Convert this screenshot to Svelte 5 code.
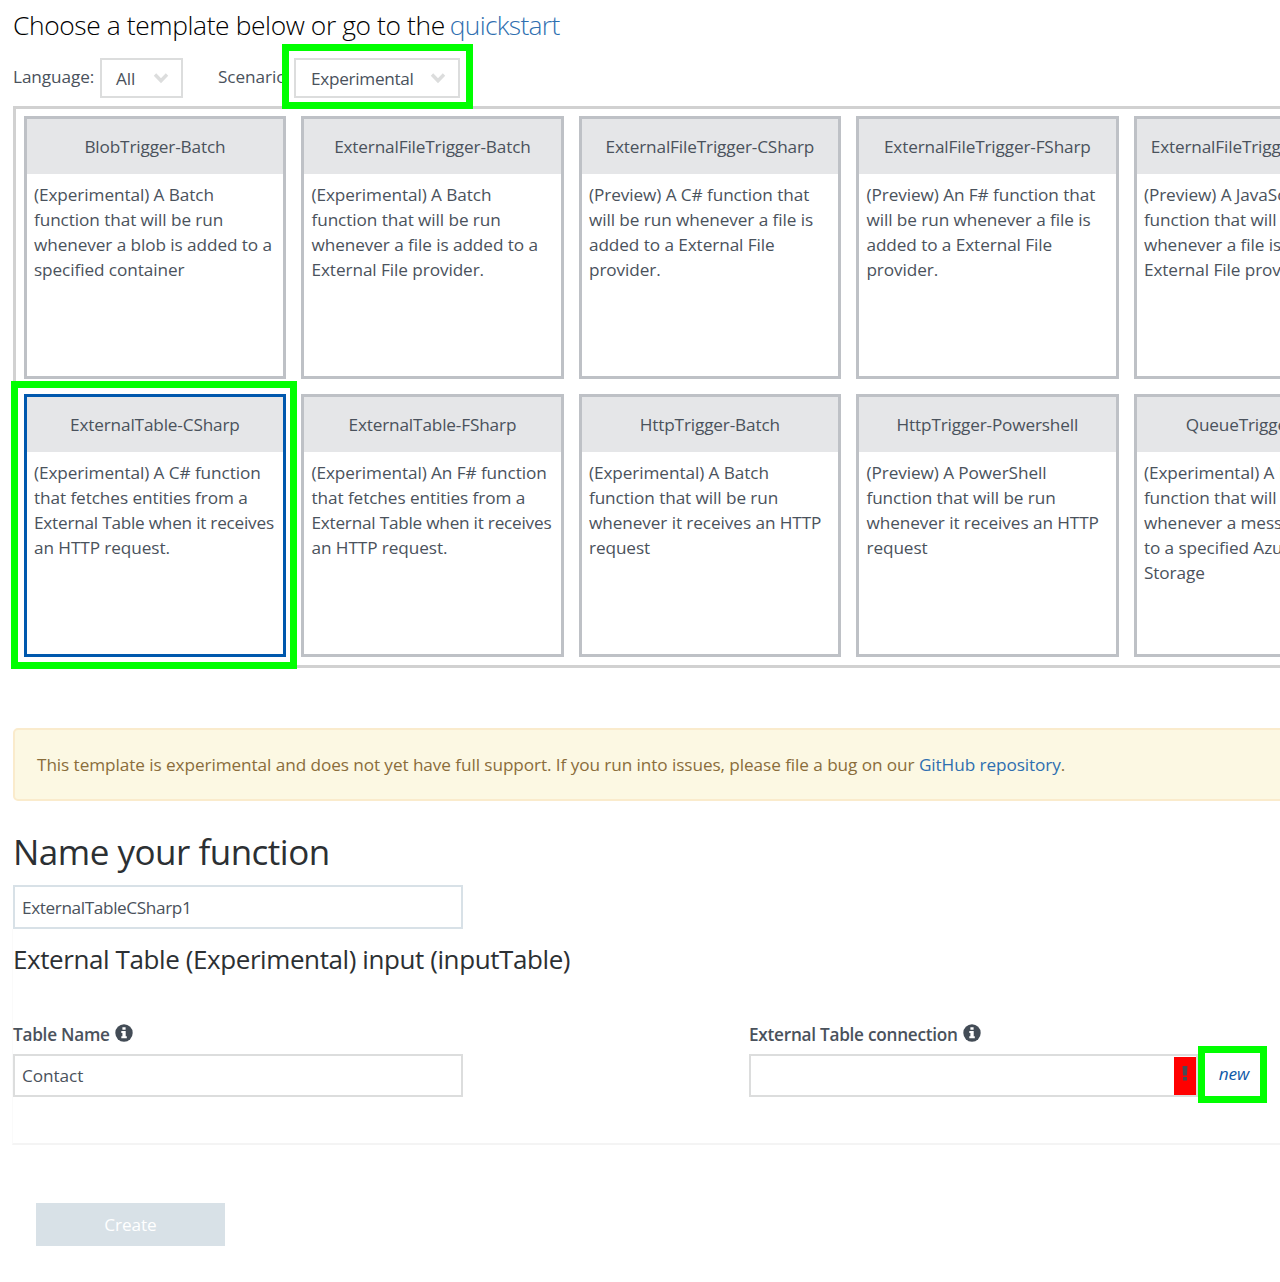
<script>
  const templates = [
    ['BlobTrigger-Batch', ['(Experimental) A Batch', 'function that will be run', 'whenever a blob is added to a', 'specified container']],
    ['ExternalFileTrigger-Batch', ['(Experimental) A Batch', 'function that will be run', 'whenever a file is added to a', 'External File provider.']],
    ['ExternalFileTrigger-CSharp', ['(Preview) A C# function that', 'will be run whenever a file is', 'added to a External File', 'provider.']],
    ['ExternalFileTrigger-FSharp', ['(Preview) An F# function that', 'will be run whenever a file is', 'added to a External File', 'provider.']],
    ['ExternalFileTrigger-JavaScript', ['(Preview) A JavaScript', 'function that will be run', 'whenever a file is added to a', 'External File provider.']],
    ['ExternalTable-CSharp', ['(Experimental) A C# function', 'that fetches entities from a', 'External Table when it receives', 'an HTTP request.']],
    ['ExternalTable-FSharp', ['(Experimental) An F# function', 'that fetches entities from a', 'External Table when it receives', 'an HTTP request.']],
    ['HttpTrigger-Batch', ['(Experimental) A Batch', 'function that will be run', 'whenever it receives an HTTP', 'request']],
    ['HttpTrigger-Powershell', ['(Preview) A PowerShell', 'function that will be run', 'whenever it receives an HTTP', 'request']],
    ['QueueTrigger-Batch', ['(Experimental) A Batch', 'function that will be run', 'whenever a message is added', 'to a specified Azure Queue', 'Storage']],
  ];
  let selected = $state('ExternalTable-CSharp');
</script>

{#snippet chevron()}
  <svg class="chevron" width="16" height="12" viewBox="0 0 16 12"><path d="M2 2.5 L8 8.7 L14 2.5" fill="none" stroke="#dcdddd" stroke-width="3.4" /></svg>
{/snippet}

{#snippet info()}
  <svg class="info" width="18" height="18" viewBox="0 0 18 18">
    <circle cx="9" cy="9" r="8.7" fill="#434c56" />
    <path d="M7.4 3.3h3.2v2.5H7.4zM6.3 7.1h4.4v5.2h1.1v1.9H6.3v-1.9h1.1V9H6.3z" fill="#fff" />
  </svg>
{/snippet}

<main>
  <h1><span>Choose a template below or go to the</span> <a href="#quickstart">quickstart</a></h1>

  <div class="filters">
    <span class="lang">Language:</span>
    <div class="select all"><span>All</span>{@render chevron()}</div>
    <span class="scen">Scenario</span>
    <div class="select exp"><span>Experimental</span>{@render chevron()}<i class="mark mark-scenario"></i></div>
  </div>

  <section class="templates">
    {#each templates as [name, lines]}
      <div class="card" class:selected={selected === name}>
        <div class="name">{name}</div>
        <div class="desc">{#each lines as line}<div class:tight={line.length > 30}>{line}</div>{/each}</div>
        {#if selected === name}<i class="mark mark-card"></i>{/if}
      </div>
    {/each}
  </section>

  <div class="alert"><p>This template is experimental and does not yet have full support. If you run into issues, please file a bug on our <a href="#repo">GitHub repository</a>.</p></div>

  <h2>Name your function</h2>
  <div class="field fn">ExternalTableCSharp1</div>

  <section class="binding">
    <h3>External Table (Experimental) input (inputTable)</h3>
    <div class="params">
      <div class="param">
        <div class="label"><b>Table Name</b>{@render info()}</div>
        <div class="field">Contact</div>
      </div>
      <div class="param">
        <div class="label"><b>External Table connection</b>{@render info()}</div>
        <div class="row">
          <div class="field req">
            <span class="error"><svg width="6" height="15" viewBox="0 0 6 15"><path d="M.6 0h4.8L5 9.5H1zM1 11h4v3.6H1z" fill="#434c56" /></svg></span>
          </div>
          <div class="new"><a href="#new">new</a><i class="mark mark-new"></i></div>
        </div>
      </div>
    </div>
  </section>

  <div class="create">Create</div>
</main>

<style>
  :global(body) { background: #fff; overflow: hidden; }
  main {
    box-sizing: border-box; width: 1280px; height: 1282px; overflow: hidden; padding-left: 13px;
    font: 17.2px/25px 'Open Sans', 'Noto Sans', sans-serif; letter-spacing: -0.08px; color: #4a525c;
  }
  main * { box-sizing: border-box; }
  h1, h2, h3, p { margin: 0; font-weight: 400; white-space: nowrap; }
  a { color: #2f6fb0; text-decoration: none; }
  h1 { height: 58px; padding-top: 7px; font-size: 26.4px; line-height: 36px; font-weight: 300; letter-spacing: -0.4px; color: #000; display: flex; gap: 5px; }
  h1 a { letter-spacing: -0.7px; }
  .filters { display: flex; height: 48px; white-space: nowrap; }
  .lang { width: 87px; padding-top: 6px; }
  .scen { width: 76px; margin: 6px 0 0 35px; height: 25px; }
  .select { position: relative; height: 40px; border: 2px solid #dcdddd; display: flex; align-items: center; justify-content: space-between; padding: 0 12px 0 14px; }
  .all { width: 83px; }
  .exp { width: 166px; padding-left: 15px; letter-spacing: -0.3px; }
  .mark { position: absolute; border: 7px solid #0f0; pointer-events: none; }
  .mark-scenario { left: -14px; top: -16px; width: 191px; height: 65px; }
  .mark-card { left: -16px; top: -16px; width: 286px; height: 288px; }
  .mark-new { left: 0; top: -8px; width: 69px; height: 57px; }

  .templates {
    width: 1420px; height: 562px; border: 3px solid #d1d1d1; padding: 7px 7.7px;
    display: grid; grid-template-columns: repeat(5, 262.4px); grid-auto-rows: 263px; gap: 15px 15.1px;
  }
  .card { position: relative; border: 3px solid #bec1c6; white-space: nowrap; }
  .selected { border-color: #0058ad; }
  .name { height: 55px; background: #e5e6e8; text-align: center; line-height: 55px; letter-spacing: -0.15px; }
  .desc { padding: 8px 7.3px; }
  .tight { letter-spacing: -0.23px; }

  .alert { width: 1420px; height: 73px; margin-top: 60px; padding: 22px; border: 2px solid #faebcc; border-radius: 5px; background: #fcf8e3; color: #8a6d3b; }
  h2 { height: 84px; padding-top: 28px; font-size: 35px; line-height: 46px; letter-spacing: -0.5px; color: #2c3033; }
  .field { width: 450px; height: 43px; border: 2px solid #dcdddd; padding: 7px; }
  .fn { height: 44px; border-color: #d8e1e7; padding-top: 8px; letter-spacing: -0.38px; }
  .binding { width: 1420px; height: 216px; margin-left: -1px; border-left: 1px solid #fafafa; border-bottom: 2px solid #f4f4f4; }
  h3 { height: 93px; padding-top: 12px; font-size: 26px; line-height: 36px; letter-spacing: -0.41px; color: #2c3033; }
  .params { display: flex; gap: 286px; }
  .label { display: flex; height: 32px; gap: 5px; white-space: nowrap; }
  .label b { font-weight: 600; letter-spacing: -0.26px; }
  .info { margin-top: 2px; }
  .row { display: flex; }
  .req { width: 449px; display: flex; justify-content: flex-end; padding: 1px 0 0; }
  .error { width: 22px; height: 38px; background: #f00; display: flex; justify-content: center; padding-top: 9px; }
  .new { position: relative; width: 69px; padding-top: 7px; text-align: center; font-style: italic; }
  .new a { color: #0f5aa8; padding-left: 3px; }
  .create { margin: 58px 0 0 23px; width: 189px; height: 43px; background: #d8e1e7; color: #fff; text-align: center; line-height: 43px; }
</style>
